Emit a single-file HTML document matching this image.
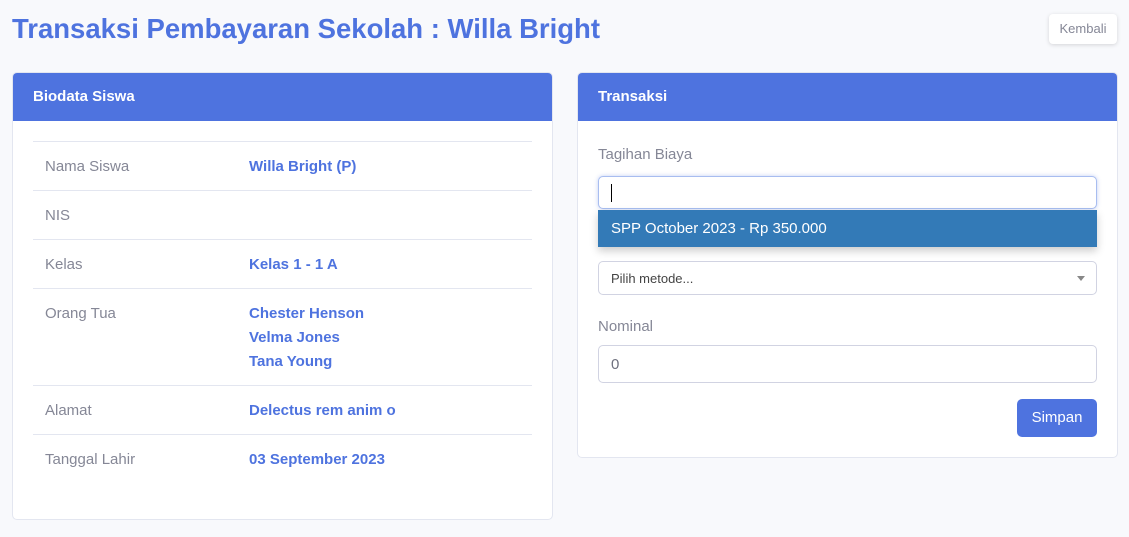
<!DOCTYPE html>
<html><head><meta charset="utf-8"><style>
*{box-sizing:border-box;margin:0;padding:0}
body{width:1129px;height:537px;background:#f8f9fc;font-family:"Liberation Sans",sans-serif;position:relative;overflow:hidden}
.abs{position:absolute}
.card{position:absolute;background:#fff;border:1px solid #e3e6f0;border-radius:5px;overflow:hidden}
.hd{height:48px;background:#4e73df;color:#fff;font-weight:bold;font-size:15px;line-height:48px;padding-left:20px}
.line{position:absolute;left:20px;right:20px;height:1px;background:#e3e6f0}
.lbl{position:absolute;left:32px;color:#858796;font-size:15px}
.val{position:absolute;left:236px;color:#4e73df;font-weight:bold;font-size:15px;line-height:24px}
.inp{position:absolute;left:20px;width:499px;border:1px solid #d1d3e2;border-radius:5px;background:#fff}
</style></head><body>
<svg class="abs" style="left:0;top:0" width="620" height="50"><text x="12" y="38" textLength="588" lengthAdjust="spacingAndGlyphs" fill="#4e73df" font-family="Liberation Sans" font-weight="bold" font-size="28">Transaksi Pembayaran Sekolah : Willa Bright</text></svg>
<div class="abs" style="left:1049px;top:14px;width:68px;height:30px;background:#fff;border-radius:4px;box-shadow:0 1px 4px rgba(0,0,0,.15);color:#858796;font-size:13px;line-height:30px;text-align:center">Kembali</div>

<div class="card" style="left:12px;top:72px;width:541px;height:448px">
<div class="hd">Biodata Siswa</div>
<div class="line" style="top:68px"></div>
<div class="lbl" style="top:85px">Nama Siswa</div><div class="val" style="top:82px">Willa Bright (P)</div>
<div class="line" style="top:117px"></div>
<div class="lbl" style="top:134px">NIS</div>
<div class="line" style="top:166px"></div>
<div class="lbl" style="top:183px">Kelas</div><div class="val" style="top:180px">Kelas 1 - 1 A</div>
<div class="line" style="top:215px"></div>
<div class="lbl" style="top:232px">Orang Tua</div><div class="val" style="top:229px">Chester Henson<br>Velma Jones<br>Tana Young</div>
<div class="line" style="top:312px"></div>
<div class="lbl" style="top:329px">Alamat</div><div class="val" style="top:326px">Delectus rem anim o</div>
<div class="line" style="top:361px"></div>
<div class="lbl" style="top:378px">Tanggal Lahir</div><div class="val" style="top:375px">03 September 2023</div>
</div>

<div class="card" style="left:577px;top:72px;width:541px;height:386px">
<div class="hd">Transaksi</div>
<div class="lbl" style="left:20px;top:73px">Tagihan Biaya</div>
<div class="inp" style="top:103px;height:33px;border-color:#a8bdf0;box-shadow:0 0 4px rgba(78,115,223,.35)"><div class="abs" style="left:12px;top:7px;width:1px;height:18px;background:#000"></div></div>
<div class="inp" style="top:188px;height:34px;"><span class="abs" style="left:12px;top:9px;font-size:13px;color:#444">Pilih metode...</span><span class="abs" style="right:11px;top:14px;border:4px solid transparent;border-top:5px solid #888;border-bottom:0"></span></div>
<div class="abs" style="left:20px;top:137px;width:499px;height:37px;background:#337ab7;color:#fff;font-size:15px;line-height:37px;padding-left:13px;box-shadow:0 4px 8px rgba(0,0,0,.2)">SPP October 2023 - Rp 350.000</div>
<div class="lbl" style="left:20px;top:245px">Nominal</div>
<div class="inp" style="top:272px;height:38px"><span class="abs" style="left:12px;top:10px;font-size:15px;color:#6e707e">0</span></div>
<div class="abs" style="left:439px;top:326px;width:80px;height:38px;background:#4e73df;border-radius:5px;color:#fff;font-size:15px;line-height:38px;text-align:center">Simpan</div>
</div>
</body></html>
